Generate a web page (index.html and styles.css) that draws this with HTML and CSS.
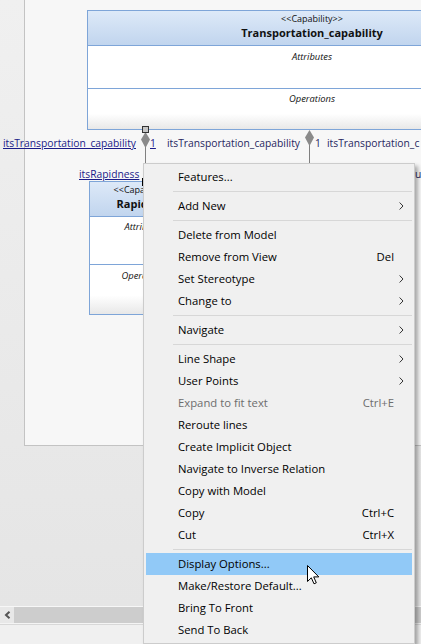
FILE: index.html
```
<!DOCTYPE html>
<html>
<head>
<meta charset="utf-8">
<link rel="stylesheet" href="styles.css">
</head>
<body>
<div class="window">
  <div class="canvas">
    <div class="frame"></div>

    <div class="class-box box-transport">
      <div class="cls-head">
        <div class="stereo">&lt;&lt;Capability&gt;&gt;</div>
        <div class="cls-name">Transportation_capability</div>
      </div>
      <div class="cls-comp comp-attr"><span>Attributes</span></div>
      <div class="cls-comp comp-ops"><span>Operations</span></div>
    </div>

    <div class="class-box box-rapid">
      <div class="cls-head">
        <div class="stereo">&lt;&lt;Capability&gt;&gt;</div>
        <div class="cls-name">Rapidness</div>
      </div>
      <div class="cls-comp comp-attr"><span>Attributes</span></div>
      <div class="cls-comp comp-ops"><span>Operations</span></div>
    </div>

    <div class="conn-line line-a"></div>
    <div class="conn-line line-b"></div>
    <svg class="diamond dia-a" width="9" height="16" viewBox="0 0 9 16"><polygon points="4.5,0 9,7.5 4.5,16 0,7.5" fill="#8a8a8a"/></svg>
    <svg class="diamond dia-b" width="9" height="16" viewBox="0 0 9 16"><polygon points="4.5,0 9,7.5 4.5,16 0,7.5" fill="#8a8a8a"/></svg>
    <div class="handle"></div>
    <div class="tick"></div>

    <span class="lbl link lbl-a">itsTransportation_capability</span>
    <span class="lbl link lbl-a1">1</span>
    <span class="lbl lbl-b">itsTransportation_capability</span>
    <span class="lbl lbl-b1">1</span>
    <span class="lbl lbl-c">itsTransportation_c</span>
    <span class="lbl link lbl-rap">itsRapidness</span>
    <span class="lbl lbl-u">u</span>
  </div>

  <div class="hscroll">
    <div class="sbtn"><svg width="7" height="8" viewBox="0 0 7 8"><polyline points="5.5,0.8 2,4 5.5,7.2" fill="none" stroke="#555" stroke-width="2"/></svg></div>
    <div class="sthumb"></div>
  </div>
  <div class="status"></div>

  <div class="menu">
    <div class="mi"><span class="ml">Features...</span></div>
    <div class="msep"></div>
    <div class="mi"><span class="ml">Add New</span><span class="marrow"><svg width="5" height="8" viewBox="0 0 5 8"><polyline points="0.6,0.5 4,4 0.6,7.5" fill="none" stroke="#333" stroke-width="1"/></svg></span></div>
    <div class="msep"></div>
    <div class="mi"><span class="ml">Delete from Model</span></div>
    <div class="mi"><span class="ml">Remove from View</span><span class="mk">Del</span></div>
    <div class="mi"><span class="ml">Set Stereotype</span><span class="marrow"><svg width="5" height="8" viewBox="0 0 5 8"><polyline points="0.6,0.5 4,4 0.6,7.5" fill="none" stroke="#333" stroke-width="1"/></svg></span></div>
    <div class="mi"><span class="ml">Change to</span><span class="marrow"><svg width="5" height="8" viewBox="0 0 5 8"><polyline points="0.6,0.5 4,4 0.6,7.5" fill="none" stroke="#333" stroke-width="1"/></svg></span></div>
    <div class="msep"></div>
    <div class="mi"><span class="ml">Navigate</span><span class="marrow"><svg width="5" height="8" viewBox="0 0 5 8"><polyline points="0.6,0.5 4,4 0.6,7.5" fill="none" stroke="#333" stroke-width="1"/></svg></span></div>
    <div class="msep"></div>
    <div class="mi"><span class="ml">Line Shape</span><span class="marrow"><svg width="5" height="8" viewBox="0 0 5 8"><polyline points="0.6,0.5 4,4 0.6,7.5" fill="none" stroke="#333" stroke-width="1"/></svg></span></div>
    <div class="mi"><span class="ml">User Points</span><span class="marrow"><svg width="5" height="8" viewBox="0 0 5 8"><polyline points="0.6,0.5 4,4 0.6,7.5" fill="none" stroke="#333" stroke-width="1"/></svg></span></div>
    <div class="mi disabled"><span class="ml">Expand to fit text</span><span class="mk">Ctrl+E</span></div>
    <div class="mi"><span class="ml">Reroute lines</span></div>
    <div class="mi"><span class="ml">Create Implicit Object</span></div>
    <div class="mi"><span class="ml">Navigate to Inverse Relation</span></div>
    <div class="mi"><span class="ml">Copy with Model</span></div>
    <div class="mi"><span class="ml">Copy</span><span class="mk">Ctrl+C</span></div>
    <div class="mi"><span class="ml">Cut</span><span class="mk">Ctrl+X</span></div>
    <div class="msep"></div>
    <div class="mi hover"><span class="ml">Display Options...</span></div>
    <div class="mi"><span class="ml">Make/Restore Default...</span></div>
    <div class="mi"><span class="ml">Bring To Front</span></div>
    <div class="mi"><span class="ml">Send To Back</span></div>
  </div>

  <svg class="cursor" width="13" height="20" viewBox="0 0 13 20"><path d="M0.5 0.5 L0.5 16.5 L4.3 12.8 L7 18.8 L9.3 17.8 L6.7 11.9 L11.8 11.9 Z" fill="#fff" stroke="#000" stroke-width="1" stroke-linejoin="miter"/></svg>
</div>
</body>
</html>
```
FILE: styles.css
```
* { box-sizing: border-box; }
html, body { margin: 0; padding: 0; }
body {
  width: 421px;
  height: 644px;
  overflow: hidden;
  font-family: "Open Sans", "Liberation Sans", sans-serif;
}
.window {
  position: relative;
  width: 421px;
  height: 644px;
  display: flex;
  flex-direction: column;
  background: #f0f0f0;
  overflow: hidden;
}
.canvas {
  position: relative;
  height: 606px;
  flex: none;
  background: linear-gradient(#f0f0f0, #e5e5e5);
  overflow: hidden;
}
.frame {
  position: absolute;
  left: 24px;
  top: -1px;
  width: 420px;
  height: 447px;
  border: 1px solid #c3c3c3;
  background: #f7f7f7;
}
.class-box {
  position: absolute;
  display: flex;
  flex-direction: column;
  border: 1px solid #7ea5d8;
  background: #fff;
  text-align: center;
  color: #111;
}
.box-transport { left: 87px; top: 10px; width: 450px; height: 120px; }
.box-rapid { left: 89px; top: 181px; width: 111px; height: 134px; }
.cls-head {
  height: 35px;
  flex: none;
  padding-top: 2px;
  border-bottom: 1px solid #7ea5d8;
  background: linear-gradient(#dde9f8, #c1d5ee);
}
.stereo { font-size: 9px; line-height: 12px; }
.cls-name { font-size: 11px; font-weight: bold; line-height: 16px; }
.cls-comp span { font-size: 9.4px; font-style: italic; line-height: 14px; display: block; }
.box-transport .comp-attr { height: 43px; flex: none; padding-top: 4px; border-bottom: 1px solid #7ea5d8; }
.box-transport .comp-ops { flex: 1; padding-top: 3px; background: linear-gradient(#fff 62%, #e8e8e8); }
.box-rapid .comp-attr { height: 48px; flex: none; padding-top: 3px; border-bottom: 1px solid #7ea5d8; }
.box-rapid .comp-ops { flex: 1; padding-top: 4px; background: linear-gradient(#fff 62%, #e8e8e8); }

.conn-line { position: absolute; width: 1px; background: #808080; }
.line-a { left: 145px; top: 147px; height: 40px; }
.line-b { left: 309px; top: 145px; height: 30px; }
.diamond { position: absolute; display: block; }
.dia-a { left: 141px; top: 132px; }
.dia-b { left: 305px; top: 130px; }
.handle {
  position: absolute;
  left: 142px; top: 126px;
  width: 7px; height: 7px;
  border: 1px solid #333;
  background: #c6c6c6;
}
.tick { position: absolute; left: 142px; top: 178px; width: 1px; height: 8px; background: #000; }

.lbl {
  position: absolute;
  font-size: 10.3px;
  line-height: 14px;
  color: #262660;
  white-space: nowrap;
}
.link { color: #1b1b88; text-decoration: underline; }
.lbl-a { left: 3px; top: 136px; }
.lbl-a1 { left: 150px; top: 136px; }
.lbl-b { left: 167px; top: 136px; }
.lbl-b1 { left: 315px; top: 136px; }
.lbl-c { left: 327px; top: 136px; }
.lbl-rap { left: 79px; top: 167px; }
.lbl-u { left: 415px; top: 167px; }

.hscroll {
  height: 18px;
  flex: none;
  display: flex;
  border-top: 1px solid #f7f7f7;
  border-bottom: 1px solid #f4f4f4;
  background: #cdcdcd;
}
.sbtn {
  width: 14px;
  display: flex;
  align-items: center;
  justify-content: center;
  background: #e8e8e8;
}
.sthumb { flex: 1; }
.status {
  flex: 1;
  border-top: 1px solid #d8d8d8;
  background: #f0f0f0;
}

.menu {
  position: absolute;
  left: 143px;
  top: 163px;
  width: 272px;
  padding: 2px;
  border: 1px solid #cccccc;
  background: #f0f0f0;
  box-shadow: 3px 3px 4px rgba(0, 0, 0, 0.32);
  font-size: 11.3px;
  color: #000;
}
.mi {
  height: 22px;
  display: flex;
  align-items: center;
  padding-left: 32px;
  padding-bottom: 1px;
  white-space: nowrap;
}
.ml { flex: 1; }
.mk { padding-right: 18px; }
.marrow { width: 18px; display: flex; align-items: center; justify-content: flex-end; padding-right: 8px; padding-top: 1px; }
.marrow svg { display: block; }
.mi.disabled { color: #6d6d6d; }
.mi.hover { background: #91c9f7; }
.msep {
  height: 7px;
  margin-left: 27px;
  position: relative;
}
.msep::after {
  content: "";
  position: absolute;
  left: 0; right: 0; top: 3px;
  height: 1px;
  background: #d7d7d7;
}
.cursor { position: absolute; left: 307px; top: 565px; }
```
